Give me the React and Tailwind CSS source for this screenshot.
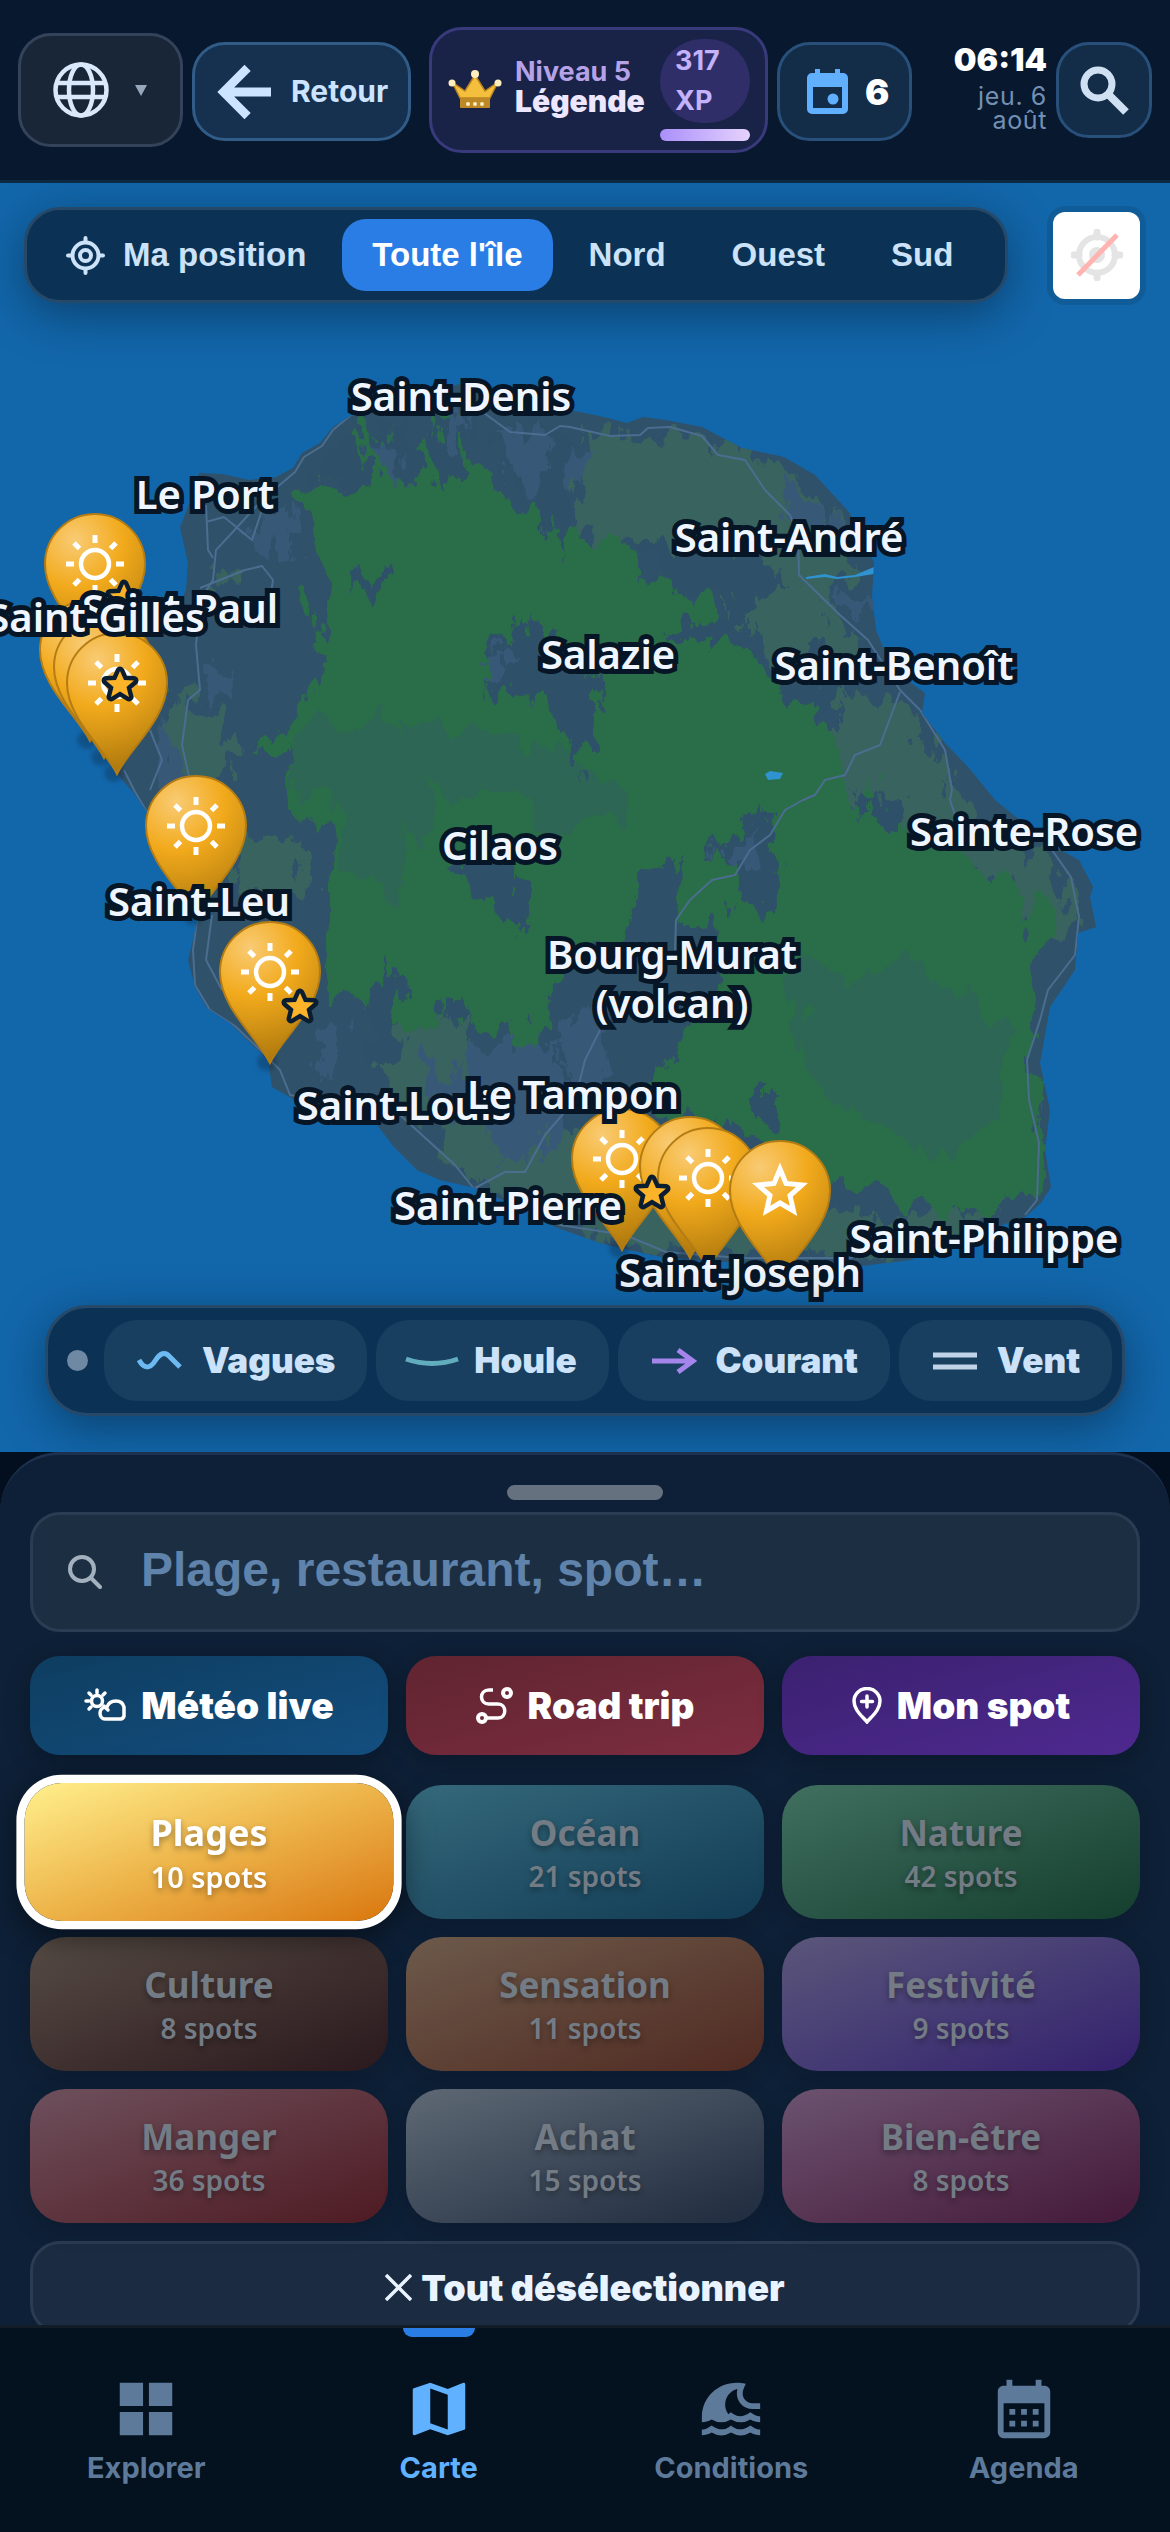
import { MdMap, MdTsunami, MdCalendarMonth } from "react-icons/md";

const MAP_TOP = 183;
const MAP_HEIGHT = 1269;

const place = (x, y) => ({
  left: `${(x / 1170) * 100}%`,
  top: `${((y - MAP_TOP) / MAP_HEIGHT) * 100}%`,
});

const towns = [
  { name: "Saint-Denis", x: 461, y: 395 },
  { name: "Le Port", x: 205, y: 493 },
  { name: "Saint-André", x: 789, y: 536 },
  { name: "Saint-Paul", x: 180, y: 607 },
  { name: "Saint-Gilles", x: 96, y: 616 },
  { name: "Salazie", x: 608, y: 653 },
  { name: "Saint-Benoît", x: 894, y: 664 },
  { name: "Sainte-Rose", x: 1024, y: 830 },
  { name: "Cilaos", x: 500, y: 844 },
  { name: "Saint-Leu", x: 199, y: 900 },
  { name: "Bourg-Murat\n(volcan)", x: 672, y: 978 },
  { name: "Saint-Louis", x: 404, y: 1104 },
  { name: "Le Tampon", x: 573, y: 1093 },
  { name: "Saint-Pierre", x: 508, y: 1204 },
  { name: "Saint-Philippe", x: 984, y: 1237 },
  { name: "Saint-Joseph", x: 740, y: 1271 },
];

const pins = [
  { x: 95, y: 564 },
  { x: 90, y: 650 },
  { x: 104, y: 667 },
  { x: 117, y: 683 },
  { x: 196, y: 826 },
  { x: 270, y: 972 },
  { x: 622, y: 1159 },
  { x: 690, y: 1167 },
  { x: 708, y: 1178 },
  { x: 780, y: 1191, star: true },
];

const stars = [
  { x: 124, y: 598 },
  { x: 120, y: 685 },
  { x: 300, y: 1007 },
  { x: 652, y: 1193 },
];

const STAR = "M0 -14 L4 -5 L14 -4.500 L6.500 2 L9 12 L0 6.500 L-9 12 L-6.500 2 L-14 -4.500 L-4 -5 Z";

const COAST =
  "M349 417 L333 427 L320 443 L302 453 L293 468 L276 477 L249 480 L222 474 L199 473 L187 510 L180 527 L188 563 L186 590 L175 615 L150 632 L120 645 L104 690 L108 740 L117 774 L134 793 L147 812 L165 850 L196 885 L197 923 L188 960 L195 987 L207 1008 L230 1023 L249 1042 L268 1060 L272 1087 L295 1100 L325 1113 L377 1125 L394 1147 L417 1170 L440 1180 L475 1188 L517 1207 L555 1227 L600 1243 L620 1248 L666 1258 L723 1262 L800 1266 L861 1266 L911 1260 L953 1240 L991 1229 L1025 1217 L1041 1203 L1051 1187 L1045 1150 L1050 1110 L1040 1063 L1050 1007 L1075 970 L1078 933 L1096 927 L1090 897 L1093 887 L1079 860 L1048 843 L995 800 L991 795 L968 767 L945 743 L922 713 L925 693 L911 683 L884 650 L876 630 L872 597 L874 563 L865 543 L849 512 L815 475 L784 457 L742 448 L702 427 L666 420 L643 417 L627 423 L604 417 L570 410 L530 398 L460 384 L410 396 Z";

function IslandDrawing() {
  return (
    <svg
      className="absolute inset-0 h-full w-full"
      viewBox="0 183 1170 1269"
      preserveAspectRatio="none"
      aria-hidden="true"
    >
      <defs>
        <clipPath id="coast">
          <path d={COAST} />
        </clipPath>
        <filter id="ragged" x="-5%" y="-5%" width="110%" height="110%">
          <feTurbulence type="fractalNoise" baseFrequency="0.030 0.014" numOctaves="6" seed="8" result="n" />
          <feDisplacementMap in="SourceGraphic" in2="n" scale="80" xChannelSelector="R" yChannelSelector="G" />
        </filter>
        <filter id="fine" x="-10%" y="-10%" width="120%" height="120%">
          <feTurbulence type="fractalNoise" baseFrequency="0.06 0.03" numOctaves="5" seed="3" result="n" />
          <feDisplacementMap in="SourceGraphic" in2="n" scale="52" xChannelSelector="R" yChannelSelector="G" />
        </filter>
      </defs>
      <path d={COAST} fill="#2f5169" />
      <g clipPath="url(#coast)">
        <g filter="url(#fine)" fill="#39645f">
          <path d="M580 432 L640 440 L700 432 L745 455 L790 470 L840 520 L858 560 L820 600 L850 640 L800 690 L740 620 L700 560 L640 545 L590 560 Z" />
          <path d="M830 690 L905 705 L950 770 L975 830 L1060 865 L1075 930 L1045 950 L1010 890 L940 860 L890 820 L820 800 L830 760 Z" />
          <path d="M180 690 L220 720 L238 745 L228 780 L190 785 L160 740 Z" />
          <path d="M225 835 L300 840 L300 900 L240 890 Z" />
          <path d="M370 1000 L470 1040 L560 1080 L640 1120 L700 1180 L860 1215 L1000 1215 L940 1255 L620 1248 L500 1190 L450 1140 L380 1100 Z" />
          <path d="M215 570 L235 572 L232 592 L222 590 Z" />
        </g>
        <g filter="url(#ragged)">
          <path
            d="M362 425 L392 440 L430 425 L460 450 L500 490 L545 510 L600 550 L650 570 L690 600 L735 650 L800 690 L850 770 L900 820 L960 850 L1025 890 L1050 950 L1035 1010 L1030 1080 L1038 1150 L1025 1200 L960 1210 L880 1205 L800 1170 L745 1130 L700 1110 L620 1090 L565 1040 L480 1020 L440 1030 L370 1010 L322 1000 L326 930 L336 880 L335 835 L290 810 L285 780 L325 770 L275 752 L300 710 L302 670 L328 630 L316 590 L318 560 L300 545 L305 515 L285 488 L350 480 L340 460 Z"
            fill="#2c6e49"
          />
          <path d="M320 720 L390 730 L430 790 L400 900 L350 870 L335 800 L290 790 Z" fill="#2e6656" />
          <path d="M470 730 L560 750 L620 790 L600 830 L540 840 L520 800 L460 800 L400 760 L400 720 Z" fill="#2e6656" />
          <path d="M790 975 L870 960 L960 985 L1000 1040 L1000 1110 L940 1160 L870 1120 L830 1100 L800 1040 Z" fill="#2e6656" />
        </g>
        <g filter="url(#fine)" fill="#2f5169">
          <path d="M340 440 L360 430 L375 470 L345 490 L310 480 Z" />
          <path d="M370 440 L400 420 L425 470 L405 480 Z" />
          <path d="M430 420 L470 420 L465 470 L440 490 Z" />
          <path d="M490 430 L560 420 L575 500 L560 560 L535 480 L510 500 L500 470 Z" />
          <path d="M350 580 L380 565 L385 580 L355 595 Z" />
          <path d="M495 640 L530 620 L590 660 L600 710 L575 770 L555 710 L510 690 L485 700 Z" />
          <path d="M570 690 L605 670 L590 740 L565 750 Z" />
          <path d="M448 870 L490 850 L525 880 L520 930 L470 890 Z" />
          <path d="M640 545 L700 540 L760 560 L790 580 L750 600 L680 590 Z" />
          <path d="M700 620 L760 580 L770 590 L720 640 L660 640 Z" />
          <path d="M560 960 L625 935 L645 870 L680 860 L675 910 L720 930 L715 980 L680 1040 L640 1110 L580 1130 L520 1110 Z" />
          <path d="M715 850 L770 805 L785 850 L765 910 L735 905 L740 870 Z" />
          <path d="M375 990 L395 960 L400 1000 L395 1060 L365 1070 Z" />
          <path d="M440 1000 L460 990 L475 1050 L460 1080 Z" />
          <path d="M745 1095 L775 1095 L775 1125 L755 1125 Z" />
          <path d="M790 660 L830 640 L840 700 L780 710 Z" />
          <path d="M860 795 L905 800 L895 830 L860 820 Z" />
        </g>
        <g filter="url(#fine)" fill="#395878">
          <path d="M245 535 L290 500 L305 550 L270 555 Z" />
          <path d="M375 445 L395 450 L400 480 L385 470 Z" />
          <path d="M445 400 L465 420 L458 445 L445 440 Z" />
          <path d="M500 430 L545 430 L550 470 L530 500 L505 480 Z" />
          <path d="M565 450 L590 460 L580 490 L565 480 Z" />
          <path d="M785 480 L840 520 L830 545 L790 520 Z" />
          <path d="M835 590 L870 600 L865 620 L835 615 Z" />
          <path d="M160 720 L180 760 L190 790 L170 790 L150 740 Z" />
          <path d="M205 665 L240 680 L235 700 L205 690 Z" />
          <path d="M310 1030 L345 1020 L340 1080 L315 1075 Z" />
          <path d="M420 1050 L520 1040 L560 1050 L560 1150 L480 1170 L430 1090 Z" />
          <path d="M560 1020 L600 1000 L610 1070 L570 1100 Z" />
          <path d="M725 850 L760 830 L755 870 L735 870 Z" />
          <path d="M485 660 L510 645 L505 675 L482 690 Z" />
        </g>
        <g filter="url(#fine)" fill="#39645f">
          <path d="M440 1120 L480 1110 L500 1160 L470 1185 L440 1150 Z" />
          <path d="M440 1020 L465 1020 L470 1070 L445 1075 Z" />
          <path d="M550 1130 L590 1140 L640 1200 L580 1220 L540 1180 Z" />
        </g>
        <g fill="none" stroke="#4b6d90" strokeWidth="2" strokeLinejoin="round">
          <path d="M351 415 L333 430 L322 446 L304 457 L295 472 L262 500 L230 535 L216 550 L213 580 L200 600 L196 645 L200 690 L188 700 L182 745 L192 790" />
          <path d="M206 505 L208 550 L213 558 M206 522 L224 517 L252 540 L262 510 M200 588 L245 570 L262 566 L273 580 L270 600" />
          <path d="M124 770 L134 790 L147 812 M150 790 L162 760 L150 730" />
          <path d="M480 410 L510 432 L545 435 L560 426 L570 427 L610 436 L640 435 L648 428 L670 427 L702 436 L718 455 L745 460 L765 490 L790 515 L798 535 L799 575 L840 615 L868 640 L900 690 L920 710 L945 750 L952 790 L950 800 L955 815" />
          <path d="M900 692 L880 745 L855 755 L845 775 L825 780 L815 795 L803 800 L785 810 L770 835 L750 850 L735 875 L712 880 L690 900 L676 920 L675 950" />
          <path d="M1052 850 L1071 877 L1079 917 L1075 955 L1048 990 L1040 1020 L1027 1060 L1029 1100 L1039 1143 L1037 1200 L1025 1215" />
          <path d="M197 920 L193 950 L195 985 L210 1010 L235 1026 L260 1050 L280 1070 L290 1095 L400 1115 L455 1165 L475 1190 L560 1225 L625 1235 L666 1252 L740 1258 L850 1258 L890 1245" />
          <path d="M212 915 L206 960 L222 990 M475 1188 L505 1172 L525 1172 L545 1135 L575 1100 L585 1060 L600 1030" />
        </g>
        <path d="M806 577 L825 574 L837 577 L855 575 L874 567 L874 574 L855 577 L837 579 L825 577 L806 579 Z" fill="#2f93d0" />
        <path d="M765 774 L770 771 L783 773 L780 779 L768 780 Z" fill="#2f93d0" />
      </g>
    </svg>
  );
}

function Pin({ x, y, star }) {
  return (
    <button
      type="button"
      aria-label="Plage"
      style={place(x, y)}
      className="absolute -mt-[52px] -ml-[52px] block h-[156px] w-[104px]"
    >
      <svg viewBox="-52 -52 104 156" className="h-full w-full overflow-visible" aria-hidden="true">
        <defs>
          <radialGradient id="pinFill" gradientUnits="userSpaceOnUse" cx="-20" cy="-24" r="120">
            <stop offset="0" stopColor="#f9cb74" />
            <stop offset="0.4" stopColor="#f2aa1c" />
            <stop offset="1" stopColor="#a8740c" />
          </radialGradient>
        </defs>
        <ellipse cx="-3" cy="90" rx="10" ry="9" fill="#0b2236" opacity="0.3" className="blur-[2px]" />
        <path
          d="M0 91 C-12 66 -50 36 -50 0 A50 50 0 0 1 50 0 C50 36 12 66 0 91 Z"
          fill="url(#pinFill)"
          stroke="#b47c14"
          strokeWidth="2"
        />
        {star ? (
          <path
            d="M0 -22 L6 -7.500 L22 -6 L10 4.500 L13.500 20 L0 12 L-13.500 20 L-10 4.500 L-22 -6 L-6 -7.500 Z"
            fill="none"
            stroke="#fff"
            strokeWidth="5"
          />
        ) : (
          <g fill="none" stroke="#fff" strokeWidth="5">
            <circle r="14" strokeWidth="4.500" />
            <path d="M0 -29V-21M0 29V21M-29 0H-21M29 0H21M-21 -21L-15.500 -15.500M21 21L15.500 15.500M-21 21L-15.500 15.500M21 -21L15.500 -15.500" />
          </g>
        )}
      </svg>
    </button>
  );
}

const regions = ["Toute l'île", "Nord", "Ouest", "Sud"];

const layers = [
  {
    label: "Vagues",
    icon: <path d="M3 17c5 9 11 9 16 1s10-10 15-4l10 10" stroke="#6db9f2" />,
  },
  { label: "Houle", icon: <path d="M-2 16q26 9 52 0" stroke="#62adbd" /> },
  { label: "Courant", icon: <path d="M3 18h41M29 7l15 11-15 11" stroke="#a585ec" /> },
  { label: "Vent", icon: <path d="M2 12h44M2 24h44" stroke="#c0d3e8" /> },
];

const categories = [
  { name: "Plages", count: 10, active: true },
  { name: "Océan", count: 21, tone: "from-[#35697b] to-[#113b54]" },
  { name: "Nature", count: 42, tone: "from-[#406f60] to-[#143f2f]" },
  { name: "Culture", count: 8, tone: "from-[#564c45] to-[#2b191d]" },
  { name: "Sensation", count: 11, tone: "from-[#6c5a4b] to-[#502a22]" },
  { name: "Festivité", count: 9, tone: "from-[#5b567a] to-[#341f6d]" },
  { name: "Manger", count: 36, tone: "from-[#6d505d] to-[#4e1a23]" },
  { name: "Achat", count: 15, tone: "from-[#5f6975] to-[#1f2b3e]" },
  { name: "Bien-être", count: 8, tone: "from-[#6b5370] to-[#441839]" },
];

const actions = [
  {
    label: "Météo live",
    tone: "from-[#0e3d60] to-[#134f80]",
    icon: (
      <svg viewBox="0 0 42 36" className="w-[42px]" fill="none" stroke="#fff" strokeWidth="3.500" strokeLinecap="round" aria-hidden="true">
        <circle cx="13" cy="13" r="5.500" />
        <path d="M13 2v3M2 13h3M5 5l2 2M21 5l-2 2M5 21l2-2" />
        <path d="M20 31h17a4 4 0 0 0 3-3V19c-1-4-4-6-8-6-5 0-8 3-9 6-5 0-7 3-7 6s2 6 5 6ZM20 18l4 4" />
      </svg>
    ),
  },
  {
    label: "Road trip",
    tone: "from-[#602430] to-[#7d2d40]",
    icon: (
      <svg viewBox="0 0 37 37" className="w-[37px]" fill="none" stroke="#fff" strokeWidth="4" aria-hidden="true">
        <circle cx="31" cy="6" r="4" />
        <circle cx="6" cy="31" r="4" />
        <path d="M10 31h12c9 0 9-14 0-14h-9C3 17 3 3 13 3h4" strokeWidth="3.500" />
      </svg>
    ),
  },
  {
    label: "Mon spot",
    tone: "from-[#3b2170] to-[#4e2990]",
    icon: (
      <svg viewBox="0 0 30 37" className="w-[30px]" fill="none" stroke="#fff" strokeWidth="3.500" strokeLinecap="round" aria-hidden="true">
        <path d="M15 35C10 29 2 23 2 14a13 12.500 0 0 1 26 0c0 9-8 15-13 21Z" />
        <path d="M15 9v11M9.500 14.500h11" />
      </svg>
    ),
  },
];

const GridIcon = () => (
  <svg viewBox="0 0 24 24" className="size-[70px]" fill="currentColor" aria-hidden="true">
    <path d="M3 3h8v8H3zM13 3h8v8h-8zM3 13h8v8H3zM13 13h8v8h-8z" />
  </svg>
);

const tabs = [
  { label: "Explorer", Icon: GridIcon },
  { label: "Carte", Icon: MdMap, active: true },
  { label: "Conditions", Icon: MdTsunami },
  { label: "Agenda", Icon: MdCalendarMonth },
];

function Header() {
  return (
    <header className="flex h-[183px] shrink-0 items-start gap-[9px] border-b-[3px] border-[#0e2a42] bg-[#08192f] px-[18px]">
      <button
        type="button"
        aria-label="Langue"
        className="mt-[33px] flex h-[114px] w-[165px] items-center justify-between rounded-[33px] border-[3px] border-[#34435a] bg-[#182637] pr-[33px] pl-8"
      >
        <svg viewBox="0 0 56 56" className="size-14" fill="none" stroke="#d9e9fb" strokeWidth="4.500" aria-hidden="true">
          <circle cx="28" cy="28" r="25.500" />
          <ellipse cx="28" cy="28" rx="12" ry="25.500" />
          <path d="M4 21h48M4 35h48" />
        </svg>
        <svg viewBox="0 0 12 11" className="w-3" fill="#97a8bd" aria-hidden="true">
          <path d="M0 0h12L6 11z" />
        </svg>
      </button>
      <button
        type="button"
        className="mt-[42px] mr-[9px] flex h-[99px] w-[219px] items-center gap-5 rounded-[33px] border-[3px] border-[#305c87] bg-[#16304f] pl-6 text-[30px] font-bold text-[#cce4ff]"
      >
        <svg
          viewBox="4 4 16 16"
          className="size-[52px] shrink-0 overflow-visible"
          fill="none"
          stroke="currentColor"
          strokeWidth="2.700"
          aria-hidden="true"
        >
          <path d="M20 12H6.500M12.800 4.600L5.400 12l7.400 7.400" />
        </svg>
        Retour
      </button>
      <button
        type="button"
        className="mt-[27px] flex h-[126px] flex-1 items-center rounded-[33px] border-[3px] border-[#383a7c] bg-[#192348] pr-[15px] pl-4 text-left"
      >
        <svg viewBox="0 0 54 40" className="w-[54px] shrink-0" aria-hidden="true">
          <path d="M12 28L4 12l13 9L27 5l10 16 13-9-8 16z" fill="#f3bf3c" stroke="#b9821f" strokeWidth="1.500" />
          <rect x="12" y="28" width="30" height="10" rx="1" fill="#bd8926" />
          <g fill="#fdeebb">
            <circle cx="27" cy="4" r="4" />
            <circle cx="4" cy="13" r="3.500" />
            <circle cx="50" cy="13" r="3.500" />
            <circle cx="20" cy="34" r="2" />
            <circle cx="27" cy="34" r="2" />
            <circle cx="34" cy="34" r="2" />
          </g>
        </svg>
        <span className="ml-[13px] flex flex-1 flex-col pb-1.5">
          <span className="text-[27px] leading-7 font-bold text-[#b6a2e6]">Niveau 5</span>
          <span className="text-[30px] leading-[30px] font-black text-[#ede6ff]">Légende</span>
        </span>
        <span className="flex w-[90px] shrink-0 flex-col gap-1.5">
          <span className="rounded-full bg-[#302e69] px-[15px] py-0.5 text-[27px] leading-10 font-bold text-[#c4b2fc]">
            317 XP
          </span>
          <span className="h-3 rounded-full bg-linear-to-r from-[#ab8ffa] to-[#e6d2fc]" />
        </span>
      </button>
      <button
        type="button"
        aria-label="Agenda, 6 évènements"
        className="mt-[42px] flex h-[99px] w-[135px] items-center gap-[17px] rounded-[33px] border-[3px] border-[#28507a] bg-[#132c47] pl-[27px] text-4xl font-black text-white"
      >
        <svg viewBox="0 0 41 45" className="w-[41px] shrink-0" aria-hidden="true">
          <path
            fillRule="evenodd"
            fill="#60b0ff"
            d="M8 0h5v4h15V0h5v4h3a5 5 0 0 1 5 5v31a5 5 0 0 1-5 5H5a5 5 0 0 1-5-5V9a5 5 0 0 1 5-5h3zM6 18v21h29V18z"
          />
          <circle cx="26" cy="30" r="5.500" fill="#60b0ff" />
        </svg>
        6
      </button>
      <div className="mt-[42px] flex w-[126px] flex-col items-end text-right">
        <time className="text-[32px] leading-9 font-black text-white">06:14</time>
        <span className="mt-1.5 w-[90px] text-[25px] leading-6 tracking-wide text-[#7390b4]">jeu. 6 août</span>
      </div>
      <button
        type="button"
        aria-label="Rechercher"
        className="mt-[42px] flex h-24 w-24 items-center justify-center rounded-[33px] border-[3px] border-[#28507a] bg-[#132c47]"
      >
        <svg viewBox="0 0 49 49" className="size-[49px]" fill="none" stroke="#cfe0f3" aria-hidden="true">
          <circle cx="18" cy="18" r="14" strokeWidth="7" />
          <path d="M28 28L46 46" strokeWidth="8" />
        </svg>
      </button>
    </header>
  );
}

function MapView() {
  return (
    <main className="relative flex flex-1 flex-col justify-between overflow-hidden bg-[#1267ab]">
      <IslandDrawing />
      {pins.map((p, i) => (
        <Pin key={i} {...p} />
      ))}
      {stars.map((s, i) => (
        <svg
          key={i}
          viewBox="-20 -20 40 40"
          style={place(s.x, s.y)}
          className="absolute size-10 -translate-x-1/2 -translate-y-1/2"
          aria-hidden="true"
        >
          <path d={STAR} fill="#fbb32a" stroke="#0b1d30" strokeWidth="9" strokeLinejoin="round" className="[paint-order:stroke_fill]" />
        </svg>
      ))}
      {towns.map((t) => (
        <span
          key={t.name}
          style={place(t.x, t.y)}
          className="absolute -translate-x-1/2 -translate-y-1/2 text-center font-['Noto_Sans',sans-serif] text-[40px] leading-[49px] font-semibold whitespace-pre text-[#f0f6ff] [-webkit-text-stroke:10px_#071626] [paint-order:stroke_fill]"
        >
          {t.name}
        </span>
      ))}

      <div className="relative mt-6 flex items-center justify-between pr-[30px] pl-6">
        <div className="flex items-center gap-1.5 rounded-[36px] border-[3px] border-[#26496a] bg-[#0b3254] py-[9px] pr-[22px] pl-[9px] font-['Liberation_Sans',Arial,sans-serif] text-[33px] leading-[72px] font-bold text-[#cbe2f8] shadow-[0_12px_48px_rgba(4,20,40,0.45)]">
          <button type="button" className="flex items-center gap-[18px] px-[30px]">
            <svg viewBox="0 0 39 39" className="size-[39px]" fill="none" stroke="currentColor" strokeWidth="4" strokeLinecap="round" aria-hidden="true">
              <circle cx="19.500" cy="19.500" r="13" />
              <circle cx="19.500" cy="19.500" r="5.500" />
              <path d="M19.500 2v4M19.500 33v4M2 19.500h4M33 19.500h4" />
            </svg>
            Ma position
          </button>
          {regions.map((r, i) => (
            <button
              key={r}
              type="button"
              className={i === 0 ? "rounded-3xl bg-[#2b7de6] px-[30px] text-white" : "px-[30px]"}
            >
              {r}
            </button>
          ))}
        </div>
        <button
          type="button"
          aria-label="Géolocalisation désactivée"
          className="flex size-[87px] items-center justify-center rounded-xl bg-white shadow-[0_0_0_6px_rgba(0,0,0,0.1)]"
        >
          <svg viewBox="0 0 52 52" className="size-[52px]" fill="none" aria-hidden="true">
            <circle cx="26" cy="26" r="18" stroke="#e4e4e4" strokeWidth="6" />
            <circle cx="26" cy="26" r="8" fill="#e4e4e4" />
            <path d="M26 3v5M26 44v5M3 26h5M44 26h5" stroke="#e4e4e4" strokeWidth="7" strokeLinecap="round" />
            <path d="M7 46L46 6" stroke="#ffb4b1" strokeWidth="5" />
          </svg>
        </button>
      </div>

      <div className="relative mx-[45px] mb-9 flex items-center gap-[9px] rounded-[42px] border-[3px] border-[#26496a] bg-[#0b3254] py-3 pr-[10px] pl-[19px] shadow-[0_12px_48px_rgba(4,20,40,0.45)]">
        <span className="mr-[7px] size-[21px] rounded-full bg-[#6f88a3]" />
        {layers.map((l) => (
          <button
            key={l.label}
            type="button"
            className="flex h-[81px] grow items-center justify-center gap-[18px] rounded-[33px] bg-[#183e60] text-[35px] font-black text-[#cbe2f8]"
          >
            <svg viewBox="0 0 48 36" className="w-12 overflow-visible" fill="none" strokeWidth="5" aria-hidden="true">
              {l.icon}
            </svg>
            {l.label}
          </button>
        ))}
      </div>
    </main>
  );
}

function Sheet() {
  return (
    <section className="h-[873px] shrink-0 overflow-hidden bg-[#030f1e]">
      <div className="rounded-t-[60px] border-t-[3px] border-[#1d314e] bg-[#0e2037] px-[30px] pt-[30px]">
        <div className="mx-auto h-[15px] w-[156px] rounded-full bg-[#66717f]" />
        <label className="mt-3 flex h-[120px] items-center rounded-[30px] border-[3px] border-[#2a3c52] bg-[#1c2e42] pl-[35px]">
          <svg viewBox="0 0 34 34" className="size-[34px]" fill="none" stroke="#a3b0be" strokeWidth="4" strokeLinecap="round" aria-hidden="true">
            <circle cx="14" cy="14" r="12" />
            <path d="M23 23l9 9" />
          </svg>
          <input
            type="text"
            aria-label="Rechercher un lieu"
            placeholder="Plage, restaurant, spot…"
            className="mb-1 ml-[39px] min-w-0 flex-1 bg-transparent font-['Liberation_Sans',Arial,sans-serif] text-5xl leading-[60px] font-bold text-white outline-none placeholder:text-[#5f83ab]"
          />
        </label>

        <div className="mt-6 grid grid-cols-3 gap-[18px]">
          {actions.map((a) => (
            <button
              key={a.label}
              type="button"
              className={`flex h-[99px] items-center justify-center gap-[15px] rounded-[30px] bg-linear-to-br text-[37px] font-black text-white shadow-[0_6px_24px_rgba(0,0,0,0.25)] ${a.tone}`}
            >
              {a.icon}
              {a.label}
            </button>
          ))}
        </div>

        <div className="mt-[30px] grid grid-cols-3 gap-[18px] font-['Noto_Sans',sans-serif] font-bold">
          {categories.map((c) => (
            <button
              key={c.name}
              type="button"
              className={`flex h-[134px] flex-col items-center justify-center rounded-[36px] pt-1 text-center ${
                c.active
                  ? "relative z-10 scale-103 bg-linear-to-br from-[#fff08c] via-[#edb449] to-[#d97706] text-white shadow-[0_0_0_8px_#fff,0_8px_30px_8px_rgba(0,0,0,0.5)] text-shadow-[0_3px_6px_rgba(0,0,0,0.35)]"
                  : `bg-linear-to-br text-[#737b85] shadow-[0_6px_24px_rgba(0,0,0,0.15)] text-shadow-[0_3px_6px_rgba(0,0,0,0.35)] ${c.tone}`
              }`}
            >
              <span className="text-[35px] leading-[42px]">{c.name}</span>
              <span className="mt-0.5 text-[28px] leading-10 font-semibold">{c.count} spots</span>
            </button>
          ))}
        </div>

        <button
          type="button"
          className="mt-[18px] mb-9 flex h-[93px] w-full items-center justify-center gap-[9px] rounded-[30px] border-[3px] border-[#2a3b52] bg-[#1b2b42] text-[36px] font-black text-[#eaf4ff]"
        >
          <svg viewBox="0 0 27 27" className="size-[27px]" fill="none" stroke="currentColor" strokeWidth="3.500" aria-hidden="true">
            <path d="M1 1l25 25M26 1L1 26" />
          </svg>
          Tout désélectionner
        </button>
      </div>
    </section>
  );
}

function TabBar() {
  return (
    <nav className="h-[207px] shrink-0 border-t-[3px] border-[#121d28] bg-[#04111e]">
      <ul className="grid h-full grid-cols-4">
        {tabs.map(({ label, Icon, active }) => (
          <li key={label}>
            <a
              href={`#${label.toLowerCase()}`}
              className={`flex flex-col items-center text-[29px] leading-9 font-bold ${
                active ? "text-[#60b1ff]" : "text-[#5d7a9b]"
              }`}
            >
              <span className={`h-[9px] w-[72px] rounded-b-[9px] ${active ? "bg-[#2b7de6]" : ""}`} />
              <span className="mt-[37px] mb-[6px]">
                <Icon className="block size-[70px]" />
              </span>
              {label}
            </a>
          </li>
        ))}
      </ul>
    </nav>
  );
}

export default function App() {
  return (
    <div className="flex h-screen min-h-[1800px] flex-col overflow-hidden bg-[#030f1e] font-['Inter',sans-serif]">
      <Header />
      <MapView />
      <Sheet />
      <TabBar />
    </div>
  );
}
